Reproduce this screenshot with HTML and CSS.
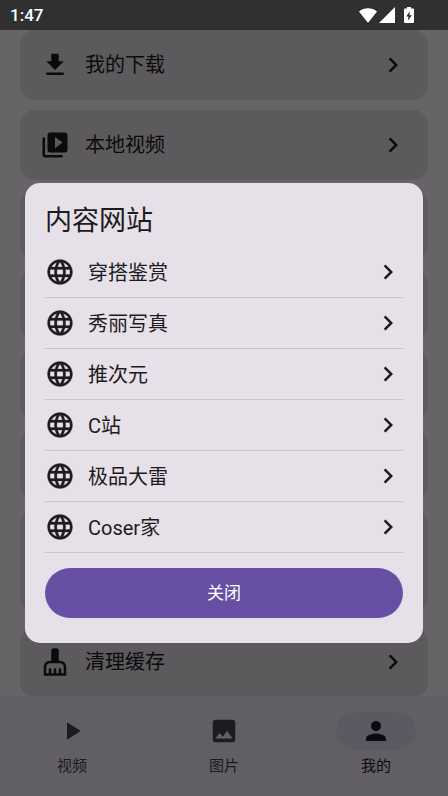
FILE: index.html
```html
<!DOCTYPE html>
<html lang="zh-CN">
<head>
<meta charset="utf-8">
<meta name="viewport" content="width=device-width, initial-scale=1">
<title>内容网站</title>
<link rel="stylesheet" href="styles.css">
</head>
<body>
<svg class="sprite" aria-hidden="true">
  <symbol id="chevron" viewBox="0 0 24 24"><path d="M10 6 8.590 7.410 13.170 12l-4.580 4.590L10 18l6-6z"/></symbol>
  <symbol id="globe" viewBox="0 0 24 24"><path d="M11.990 2C6.470 2 2 6.480 2 12s4.470 10 9.990 10C17.520 22 22 17.520 22 12S17.520 2 11.990 2zm6.930 6h-2.950c-.32-1.250-.78-2.450-1.380-3.560 1.840.63 3.370 1.910 4.330 3.560zM12 4.040c.83 1.200 1.480 2.530 1.910 3.960h-3.820c.43-1.430 1.080-2.760 1.910-3.960zM4.260 14C4.100 13.360 4 12.690 4 12s.1-1.360.26-2h3.380c-.08.66-.14 1.320-.14 2s.06 1.340.14 2H4.260zm.82 2h2.950c.32 1.250.78 2.450 1.380 3.560-1.840-.63-3.370-1.900-4.330-3.560zm2.950-8H5.080c.96-1.660 2.490-2.930 4.330-3.560C8.810 5.550 8.350 6.750 8.030 8zM12 19.960c-.83-1.200-1.480-2.530-1.910-3.960h3.820c-.43 1.430-1.080 2.760-1.910 3.960zM14.340 14H9.660c-.09-.66-.16-1.320-.16-2s.07-1.350.16-2h4.680c.09.65.16 1.320.16 2s-.07 1.340-.16 2zm.25 5.560c.6-1.110 1.060-2.310 1.380-3.560h2.950c-.96 1.650-2.490 2.930-4.330 3.560zM16.360 14c.08-.66.14-1.320.14-2s-.06-1.340-.14-2h3.380c.16.64.26 1.310.26 2s-.1 1.360-.26 2h-3.380z" stroke="currentColor" stroke-width=".2"/></symbol>
</svg>

<header class="status">
  <span class="clock">1:47</span>
  <span class="signals">
    <svg width="18" height="16" viewBox="0 0 18 16"><path d="M0 4.500C5 .3 13 .3 18 4.500L9.500 15.200Q9 15.800 8.500 15.200z"/></svg>
    <svg width="16" height="16" viewBox="0 0 16 16"><path d="M16 0v16H0z"/></svg>
    <svg class="battery" width="10" height="16" viewBox="0 0 10 16"><path fill-rule="evenodd" d="M3 0h4v1.500h2q1 0 1 1V15q0 1-1 1H1q-1 0-1-1V2.500q0-1 1-1h2zM5.600 4.500 2.200 9.600h2.100v3.900L7.800 8.300H5.600z"/></svg>
  </span>
</header>

<div class="screen">
  <main class="cards">
    <a class="card" href="#download">
      <svg class="icon" viewBox="0 0 24 24"><path d="M19 9h-4V3H9v6H5l7 7 7-7zM5 18v2h14v-2H5z"/></svg>
      <span class="label">我的下载</span>
      <svg class="icon"><use href="#chevron"/></svg>
    </a>
    <a class="card" href="#local">
      <svg class="icon" viewBox="0 0 24 24"><path d="M4 6H2v14c0 1.100.9 2 2 2h14v-2H4V6zm16-4H8c-1.100 0-2 .9-2 2v12c0 1.100.9 2 2 2h12c1.100 0 2-.9 2-2V4c0-1.100-.9-2-2-2zm-8 12.500v-9l6 4.500-6 4.500z"/></svg>
      <span class="label">本地视频</span>
      <svg class="icon"><use href="#chevron"/></svg>
    </a>
    <div class="card"></div>
    <div class="card"></div>
    <div class="card"></div>
    <div class="card"></div>
    <div class="card tall"></div>
    <a class="card" href="#clean">
      <svg class="icon" viewBox="0 0 24 24"><path d="M16 11h-1V3c0-1.100-.9-2-2-2h-2c-1.100 0-2 .9-2 2v8H8c-2.760 0-5 2.240-5 5v7h18v-7c0-2.760-2.240-5-5-5zm3 10h-2v-3c0-.55-.45-1-1-1s-1 .45-1 1v3h-2v-3c0-.55-.45-1-1-1s-1 .45-1 1v3H9v-3c0-.55-.45-1-1-1s-1 .45-1 1v3H5v-5c0-1.650 1.350-3 3-3h8c1.650 0 3 1.350 3 3v5z"/></svg>
      <span class="label">清理缓存</span>
      <svg class="icon"><use href="#chevron"/></svg>
    </a>
  </main>

  <nav class="tabs">
    <a class="tab" href="#video">
      <span class="pill"><svg class="tab-icon" viewBox="0 0 24 24"><path d="M8 5v14l11-7z"/></svg></span>
      <span>视频</span>
    </a>
    <a class="tab" href="#picture">
      <span class="pill"><svg class="tab-icon" viewBox="0 0 24 24"><path d="M21 19V5c0-1.100-.9-2-2-2H5c-1.100 0-2 .9-2 2v14c0 1.100.9 2 2 2h14c1.100 0 2-.9 2-2zM8.500 13.500l2.500 3.010L14.500 12l4.500 6H5l3.500-4.500z"/></svg></span>
      <span>图片</span>
    </a>
    <a class="tab active" href="#mine" aria-current="page">
      <span class="pill"><svg class="tab-icon" viewBox="0 0 24 24"><path d="M12 12c2.210 0 4-1.790 4-4s-1.790-4-4-4-4 1.790-4 4 1.790 4 4 4zm0 2c-2.670 0-8 1.340-8 4v2h16v-2c0-2.660-5.330-4-8-4z"/></svg></span>
      <span>我的</span>
    </a>
  </nav>

  <div class="scrim">
    <section class="dialog" role="dialog" aria-modal="true" aria-labelledby="dialog-title">
      <h1 id="dialog-title">内容网站</h1>
      <ul class="sites">
        <li><a href="#s1"><svg class="icon"><use href="#globe"/></svg><span class="label">穿搭鉴赏</span><svg class="icon"><use href="#chevron"/></svg></a></li>
        <li><a href="#s2"><svg class="icon"><use href="#globe"/></svg><span class="label">秀丽写真</span><svg class="icon"><use href="#chevron"/></svg></a></li>
        <li><a href="#s3"><svg class="icon"><use href="#globe"/></svg><span class="label">推次元</span><svg class="icon"><use href="#chevron"/></svg></a></li>
        <li><a href="#s4"><svg class="icon"><use href="#globe"/></svg><span class="label">C站</span><svg class="icon"><use href="#chevron"/></svg></a></li>
        <li><a href="#s5"><svg class="icon"><use href="#globe"/></svg><span class="label">极品大雷</span><svg class="icon"><use href="#chevron"/></svg></a></li>
        <li><a href="#s6"><svg class="icon"><use href="#globe"/></svg><span class="label">Coser家</span><svg class="icon"><use href="#chevron"/></svg></a></li>
      </ul>
      <button class="close" type="button">关闭</button>
    </section>
  </div>
</div>
</body>
</html>
```
FILE: styles.css
```css
* {
  box-sizing: border-box;
}

body {
  margin: 0;
  height: 100vh;
  display: flex;
  flex-direction: column;
  font-family: Roboto, "Noto Sans CJK SC", sans-serif;
  font-size: 20px;
  line-height: 28px;
  color: #1d1b20;
}

a {
  color: inherit;
  text-decoration: none;
}

svg {
  display: block;
  flex: none;
  fill: currentColor;
}

.sprite {
  position: absolute;
  width: 0;
  height: 0;
}

.icon {
  width: 30px;
  height: 30px;
}

.label {
  flex: 1;
}

.status {
  flex: none;
  height: 30px;
  padding: 0 34px 0 10px;
  display: flex;
  align-items: center;
  justify-content: space-between;
  background: #303030;
  color: #fff;
}

.clock {
  font-size: 17px;
  font-weight: 500;
}

.signals {
  display: flex;
  gap: 2px;
}

.battery {
  margin-left: 7px;
}

.screen {
  position: relative;
  flex: 1;
  min-height: 0;
  display: flex;
  flex-direction: column;
  background: #fffbff;
}

.cards {
  flex: 1;
  min-height: 0;
  overflow: hidden;
  padding: 0 20px;
  display: flex;
  flex-direction: column;
  gap: 10px;
}

.card {
  flex: none;
  height: 70px;
  padding: 0 20px;
  display: flex;
  align-items: center;
  gap: 15px;
  border-radius: 15px;
  background: #e7e0e8;
}

.card.tall {
  height: 102px;
  margin-bottom: 5px;
}

.tabs {
  flex: none;
  height: 100px;
  padding-top: 16px;
  display: flex;
  gap: 8px;
  background: #f3edf7;
  font-size: 15px;
  line-height: 20px;
  color: #49454f;
}

.tab {
  flex: 1;
  display: flex;
  flex-direction: column;
  align-items: center;
  gap: 6px;
}

.tab.active {
  color: #1d1b20;
}

.pill {
  width: 80px;
  height: 38px;
  display: flex;
  align-items: center;
  justify-content: center;
  border-radius: 20px;
}

.active .pill {
  background: #e8def8;
  color: #1d192b;
}

.tab-icon {
  width: 30px;
  height: 30px;
}

.scrim {
  position: absolute;
  inset: 0;
  padding: 0 25px;
  display: flex;
  align-items: center;
  background: rgba(0, 0, 0, 0.6);
}

.dialog {
  flex: 1;
  padding: 22px 20px 25px;
  border-radius: 15px;
  background: #e6e0e9;
}

h1 {
  margin: 0 0 10px;
  font-size: 27px;
  line-height: 32px;
  font-weight: 400;
}

.sites {
  margin: 0 0 15px;
  padding: 0;
  list-style: none;
}

.sites a {
  height: 51px;
  display: flex;
  align-items: center;
  gap: 13px;
  border-bottom: 1px solid #cac4d0;
}

.sites .label {
  padding-top: 2px;
}

.close {
  display: block;
  width: 100%;
  height: 50px;
  border: 0;
  border-radius: 25px;
  background: #6750a4;
  color: #fff;
  font: inherit;
  font-size: 17px;
}
```
